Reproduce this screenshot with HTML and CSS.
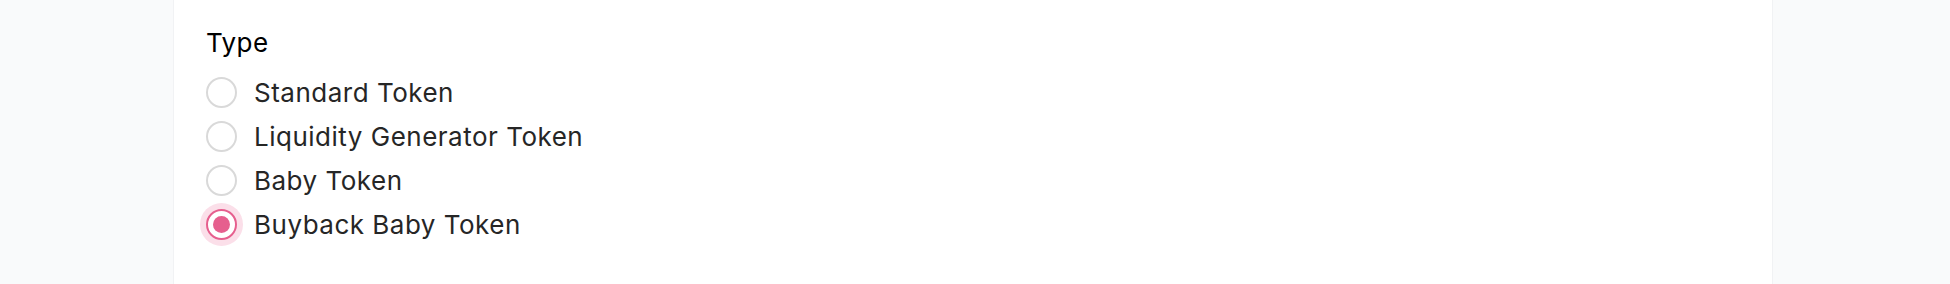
FILE: index.html
```html
<!DOCTYPE html>
<html>
<head>
<meta charset="utf-8">
<link rel="stylesheet" href="styles.css">
</head>
<body>
<div class="card">
  <div class="field">
    <div class="field-label">Type</div>
    <div class="options">
      <label class="option"><span class="radio"></span><span class="option-text">Standard Token</span></label>
      <label class="option"><span class="radio"></span><span class="option-text">Liquidity Generator Token</span></label>
      <label class="option"><span class="radio"></span><span class="option-text">Baby Token</span></label>
      <label class="option"><span class="radio checked"></span><span class="option-text">Buyback Baby Token</span></label>
    </div>
  </div>
</div>
</body>
</html>
```
FILE: styles.css
```css
html, body {
  margin: 0;
  padding: 0;
  height: 100%;
}
body {
  background: #f9fafb;
  font-family: Inter, "Noto Sans", sans-serif;
  overflow: hidden;
}
.card {
  box-sizing: border-box;
  margin-left: 173px;
  width: 1600px;
  height: 100%;
  background: #ffffff;
  border-left: 1px solid #f1f2f4;
  border-right: 1px solid #f1f2f4;
  padding: 25px 0 0 32px;
}
.field-label {
  font-size: 26px;
  line-height: 35px;
  letter-spacing: 0.4px;
  color: #000000;
  margin-bottom: 10px;
}
.options {
  display: flex;
  flex-direction: column;
}
.option {
  display: flex;
  align-items: center;
  height: 44px;
  gap: 17px;
}
.radio {
  box-sizing: border-box;
  width: 31px;
  height: 31px;
  border-radius: 50%;
  border: 2px solid #d9d9d9;
  background: #fff;
  display: flex;
  align-items: center;
  justify-content: center;
  flex-shrink: 0;
}
.radio.checked {
  border-color: #e65f8e;
  box-shadow: 0 0 0 6px #fbdfe9;
}
.radio.checked::after {
  content: "";
  width: 17px;
  height: 17px;
  border-radius: 50%;
  background: #e65f8e;
}
.option-text {
  font-size: 26px;
  line-height: 35px;
  letter-spacing: 0.5px;
  color: #262626;
}
```
